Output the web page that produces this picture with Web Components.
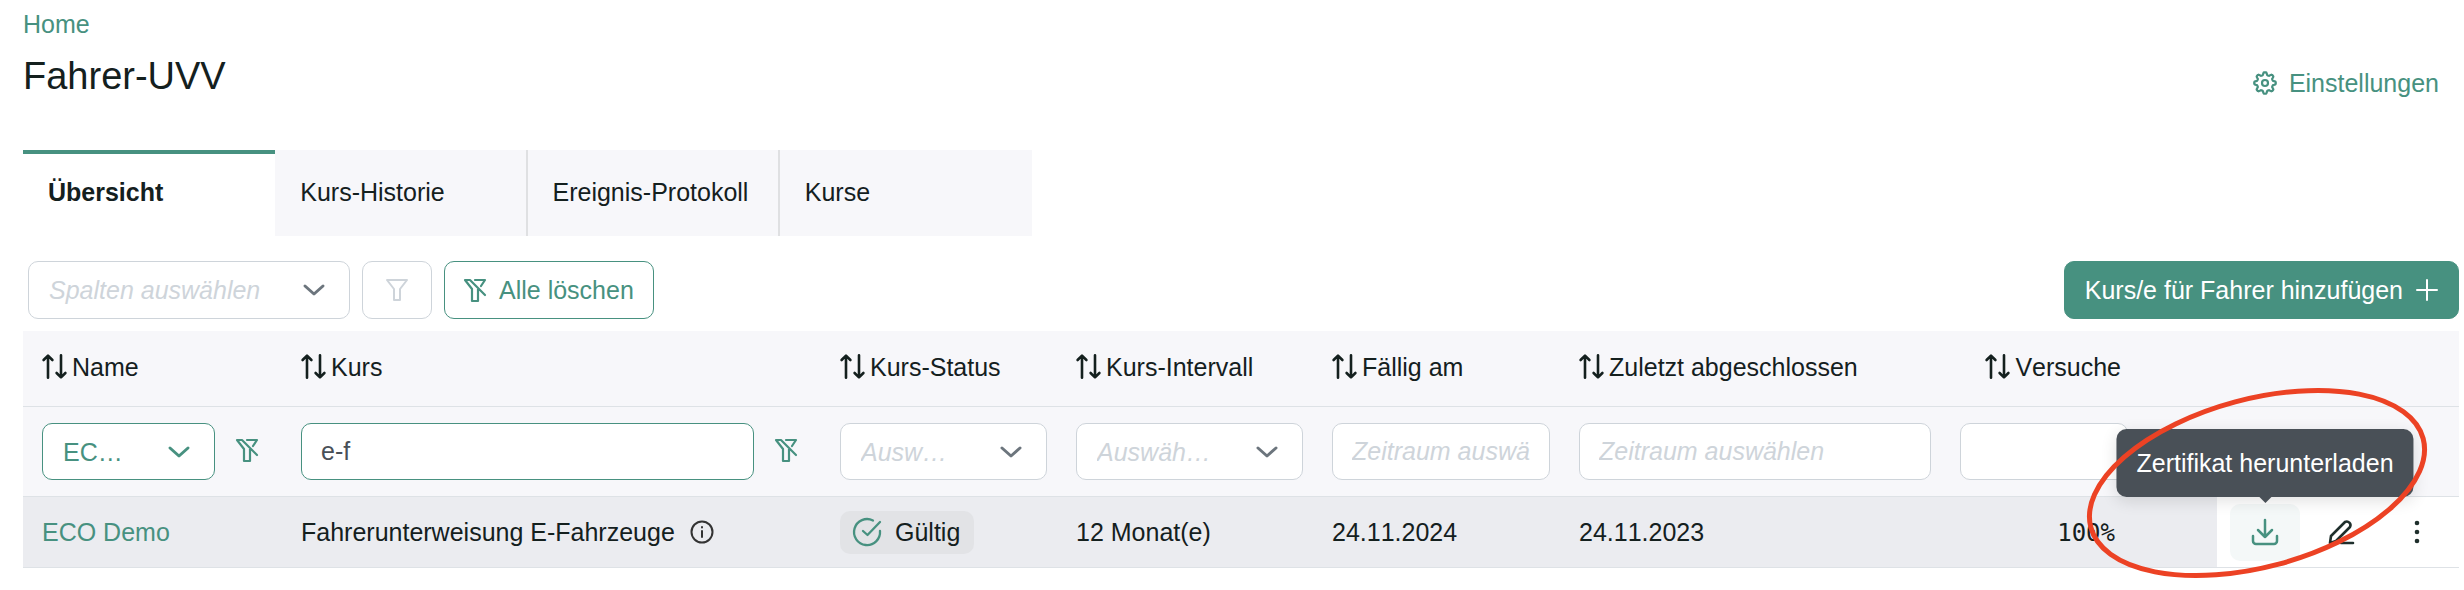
<!DOCTYPE html>
<html lang="de">
<head>
<meta charset="utf-8">
<title>Fahrer-UVV</title>
<style>
  html { background: #fff; }
  body { margin: 0; font: 25px/32px "Liberation Sans", Arial, sans-serif; color: #14201e; font-kerning: none; }
</style>
</head>
<body>
<uvv-page></uvv-page>

<template id="page">
  <style>
    :host { display: block; position: relative; padding: 8px 5px 16px 23px; }
    a { color: #479180; text-decoration: none; }
    h1 { margin: 17px 0 0; font-size: 38px; line-height: 38px; font-weight: 400; }
    header { display: flex; justify-content: space-between; height: 142px; }
    .settings { display: flex; align-items: center; gap: 12px; align-self: flex-start; margin: 59px 20px 0 0; }
    .toolbar { display: flex; align-items: center; gap: 12px; padding: 25px 0 12px 5px; }
    .toolbar uvv-select { width: 322px; --field-height: 58px; }
    .spacer { flex: 1; }
  </style>
  <header>
    <div>
      <nav aria-label="Pfad"><a href="#home">Home</a></nav>
      <h1>Fahrer-UVV</h1>
    </div>
    <a class="settings" href="#einstellungen"><uvv-icon name="gear"></uvv-icon>Einstellungen</a>
  </header>
  <uvv-tabs>
    <uvv-tab active>Übersicht</uvv-tab>
    <uvv-tab>Kurs-Historie</uvv-tab>
    <uvv-tab>Ereignis-Protokoll</uvv-tab>
    <uvv-tab>Kurse</uvv-tab>
  </uvv-tabs>
  <div class="toolbar">
    <uvv-select label="Spalten" text="Spalten auswählen"></uvv-select>
    <uvv-button variant="muted" label="Filter"><uvv-icon name="filter"></uvv-icon></uvv-button>
    <uvv-button variant="outline"><uvv-icon name="filter-slash"></uvv-icon>Alle löschen</uvv-button>
    <span class="spacer"></span>
    <uvv-button variant="solid">Kurs/e für Fahrer hinzufügen<uvv-icon name="plus"></uvv-icon></uvv-button>
  </div>
  <uvv-table></uvv-table>
</template>

<template id="table">
  <style>
    :host { display: block; }
    table { width: 100%; border-collapse: separate; border-spacing: 0; table-layout: fixed; }
    th, td { box-sizing: border-box; padding: 0 15px 0 14px; text-align: left; font-weight: 400; white-space: nowrap; vertical-align: middle; border-bottom: 1px solid #dee2e6; }
    th:first-child, td:first-child { padding-left: 19px; }
    thead th, thead td { background: #f7f7fa; }
    .heads th { height: 76px; }
    .filters td { height: 90px; }
    tbody td { height: 71px; background: #ebecf0; }
    .sort { display: inline-flex; align-items: center; gap: 6px; padding: 0; border: 0; background: none; color: inherit; font: inherit; font-kerning: none; }
    .field { display: flex; align-items: center; gap: 21px; }
    .field > :first-child { flex: 1; min-width: 0; }
    .num { text-align: right; padding-right: 22px; }
    td.num { padding-right: 28px; }
    .mono { font: 24px/32px "DejaVu Sans Mono", monospace; }
    a { color: #479180; text-decoration: none; }
    .course { display: flex; align-items: center; gap: 15px; }
    .course uvv-icon { color: #333; }
    tbody td.actions { background: #fff; padding: 0; }
    .row { display: flex; align-items: center; padding-left: 13px; gap: 6px; }
  </style>
  <table>
    <colgroup>
      <col style="width:264px"><col><col style="width:236px"><col style="width:256px"><col style="width:247px"><col style="width:381px"><col style="width:197px"><col style="width:74px"><col style="width:242px">
    </colgroup>
    <thead>
      <tr class="heads">
        <th scope="col"><button class="sort"><uvv-icon name="sort"></uvv-icon>Name</button></th>
        <th scope="col"><button class="sort"><uvv-icon name="sort"></uvv-icon>Kurs</button></th>
        <th scope="col"><button class="sort"><uvv-icon name="sort"></uvv-icon>Kurs-Status</button></th>
        <th scope="col"><button class="sort"><uvv-icon name="sort"></uvv-icon>Kurs-Intervall</button></th>
        <th scope="col"><button class="sort"><uvv-icon name="sort"></uvv-icon>Fällig am</button></th>
        <th scope="col"><button class="sort"><uvv-icon name="sort"></uvv-icon>Zuletzt abgeschlossen</button></th>
        <th scope="col" class="num"><button class="sort"><uvv-icon name="sort"></uvv-icon>Versuche</button></th>
        <td></td><td></td>
      </tr>
      <tr class="filters">
        <td><div class="field"><uvv-select active label="Name" text="EC…"></uvv-select><uvv-clear></uvv-clear></div></td>
        <td><div class="field"><uvv-input active label="Kurs" value="e-f"></uvv-input><uvv-clear></uvv-clear></div></td>
        <td><uvv-select label="Kurs-Status" text="Ausw…"></uvv-select></td>
        <td><uvv-select label="Kurs-Intervall" text="Auswäh…"></uvv-select></td>
        <td><uvv-input label="Fällig am" placeholder="Zeitraum auswählen"></uvv-input></td>
        <td><uvv-input label="Zuletzt abgeschlossen" placeholder="Zeitraum auswählen"></uvv-input></td>
        <td><uvv-input label="Versuche"></uvv-input></td>
        <td></td><td></td>
      </tr>
    </thead>
    <tbody>
      <tr>
        <td><a href="#eco-demo">ECO Demo</a></td>
        <td><span class="course">Fahrerunterweisung E-Fahrzeuge<uvv-icon name="info"></uvv-icon></span></td>
        <td><uvv-badge>Gültig</uvv-badge></td>
        <td>12 Monat(e)</td>
        <td>24.11.2024</td>
        <td>24.11.2023</td>
        <td class="num"><span class="mono">100%</span></td>
        <td></td>
        <td class="actions"><div class="row">
          <uvv-action icon="download" label="Herunterladen" tip="Zertifikat herunterladen" hot></uvv-action>
          <uvv-action icon="pencil" label="Bearbeiten"></uvv-action>
          <uvv-action icon="dots" label="Mehr"></uvv-action>
        </div></td>
      </tr>
    </tbody>
  </table>
</template>

<script>
  const define = (name, html, setup) => customElements.define(name, class extends HTMLElement {
    connectedCallback() {
      if (this.shadowRoot) return;
      const root = this.attachShadow({ mode: 'open' });
      if (html instanceof HTMLTemplateElement) root.append(html.content.cloneNode(true));
      else root.innerHTML = html;
      if (setup) setup(this, root);
    }
  });

  /* [width, height, stroke width, markup] */
  const ICONS = {
    'sort': [24, 25, 2.6, '<path d="M6 23.700V2M1.600 6L6 1.600 10.400 6M19 1.300v22M14.600 19l4.400 4.400 4.400-4.400"/>'],
    'chevron': [22, 12, 3, '<path d="M2 2l9 8 9-8"/>'],
    'filter': [22, 24, 2, '<path d="M1 2h20l-7 9v11H8V11z"/>'],
    'filter-slash': [22, 24, 2.2, '<path d="M11 2h10l-4 6M21 17L6 2H1l7 9v12h6V11"/>'],
    'plus': [22, 22, 2, '<path d="M11 1v20M1 11h20"/>'],
    'info': [24, 24, 2, '<circle cx="12" cy="12" r="10.500"/><path d="M12 11v6M12 7v.5"/>'],
    'check': [28, 28, 2.3, '<path d="M20 2.500A13 13 0 1 0 27 13M10 13l4.500 4L27 4"/>'],
    'download': [26, 26, 2.5, '<path d="M13 1v17M6 11l7 7 7-7M1 17v5a3 3 0 0 0 3 3h18a3 3 0 0 0 3-3v-5"/>'],
    'pencil': [26, 26, 2.6, '<path d="M2 24l1-7L17 3a3.700 3.700 0 0 1 5 5L8 22zM13 24h12"/>'],
    'dots': [6, 24, 0, '<g fill="currentColor"><circle cx="3" cy="3" r="2.300"/><circle cx="3" cy="12" r="2.300"/><circle cx="3" cy="21" r="2.300"/></g>'],
    'gear': [24, 24, 2.2, '<circle cx="12" cy="12" r="3"/>']
  };
  /* Eight-toothed wheel around the hub of the gear icon */
  const gear = () => {
    let d = '';
    for (let i = 0; i <= 96; i++) {
      const a = i / 96 * Math.PI * 2;
      const r = 9.4 + 1.4 * Math.tanh(2.2 * Math.cos(8 * a));
      d += (i ? 'L' : 'M') + (12 + r * Math.cos(a)).toFixed(2) + ' ' + (12 + r * Math.sin(a)).toFixed(2);
    }
    return '<path d="' + d + 'z"/>';
  };
  ICONS.gear[3] += gear();

  define('uvv-icon', '<style>:host{display:inline-flex;flex:none}svg{display:block;overflow:visible}</style>', (el, root) => {
    const [w, h, s, body] = ICONS[el.getAttribute('name')];
    root.innerHTML += `<svg width="${w}" height="${h}" viewBox="0 0 ${w} ${h}" fill="none" stroke="currentColor" stroke-width="${s}" stroke-linecap="round" stroke-linejoin="round" aria-hidden="true">${body}</svg>`;
  });

  define('uvv-tabs', `<style>
    :host { display: flex; width: 1009px; max-width: 100%; }
  </style><slot></slot>`);

  define('uvv-tab', `<style>
    :host { display: block; flex: 1; min-width: 0; }
    button { display: block; width: 100%; height: 86px; box-sizing: border-box; padding: 0 25px 2px; border: 0; border-right: 2px solid #dfe0e2; background: #f7f7fa; color: inherit; font: inherit; font-kerning: none; text-align: left; white-space: nowrap; }
    :host([active]) button { border: 0; border-top: 4px solid #479180; padding-bottom: 6px; background: #fff; font-weight: 700; }
    :host(:last-child) button { border-right: 0; }
  </style><button role="tab"><slot></slot></button>`);

  define('uvv-button', `<style>
    :host { display: block; flex: none; }
    button { display: flex; align-items: center; gap: 13px; height: 58px; box-sizing: border-box; padding: 0 19px; border: 1px solid #479180; border-radius: 10px; background: #fff; color: #479180; font: inherit; font-kerning: none; white-space: nowrap; }
    :host([variant=muted]) button { padding: 0 23px; border-color: #ced4da; color: #ced4da; }
    :host([variant=solid]) button { padding: 0 20px; background: #479180; color: #fff; }
  </style><button><slot></slot></button>`, (el, root) => {
    if (el.hasAttribute('label')) root.querySelector('button').setAttribute('aria-label', el.getAttribute('label'));
  });

  define('uvv-select', `<style>
    :host { display: grid; align-items: center; color: #6c757d; }
    select { grid-area: 1/1; width: 100%; min-width: 0; height: var(--field-height, 57px); box-sizing: border-box; margin: 0; padding: 0 60px 0 20px; appearance: none; border: 1px solid #ced4da; border-radius: 10px; background: #fff; color: #ced4da; font: inherit; font-kerning: none; font-style: italic; }
    uvv-icon { grid-area: 1/1; justify-self: end; margin-right: 25px; pointer-events: none; }
    :host([active]) { color: #479180; }
    :host([active]) select { border-color: #479180; color: #479180; font-style: normal; }
  </style><select><option></option></select><uvv-icon name="chevron"></uvv-icon>`, (el, root) => {
    root.querySelector('select').setAttribute('aria-label', el.getAttribute('label'));
    root.querySelector('option').textContent = el.getAttribute('text');
  });

  define('uvv-input', `<style>
    :host { display: block; }
    input { display: block; width: 100%; height: 57px; box-sizing: border-box; margin: 0; padding: 0 19px; border: 1px solid #ced4da; border-radius: 10px; background: #fff; color: #495057; font: inherit; font-kerning: none; }
    input::placeholder { color: #ced4da; font-style: italic; opacity: 1; }
    :host([active]) input { border-color: #479180; }
  </style><input type="text">`, (el, root) => {
    const input = root.querySelector('input');
    input.setAttribute('aria-label', el.getAttribute('label'));
    input.placeholder = el.getAttribute('placeholder') || '';
    input.value = el.getAttribute('value') || '';
  });

  define('uvv-clear', `<style>
    :host { display: block; flex: none; margin-right: 14px; }
    button { display: block; padding: 0; border: 0; background: none; color: #479180; }
  </style><button aria-label="Filter löschen"><uvv-icon name="filter-slash"></uvv-icon></button>`);

  define('uvv-badge', `<style>
    :host { display: inline-flex; align-items: center; gap: 14px; height: 43px; padding: 0 14px 0 13px; border-radius: 10px; background: #e2e3e6; vertical-align: middle; }
    uvv-icon { color: #479180; }
  </style><uvv-icon name="check"></uvv-icon><slot></slot>`);

  define('uvv-action', `<style>
    :host { display: block; position: relative; }
    button { display: flex; align-items: center; justify-content: center; width: 70px; height: 57px; padding: 0; border: 0; border-radius: 10px; background: none; color: #1f2f2c; }
    :host([hot]) button { background: #f4f8f8; color: #479180; }
    .tip { position: absolute; left: 50%; bottom: calc(100% + 7px); transform: translateX(-50%); display: flex; align-items: center; height: 68px; padding: 0 20px; border-radius: 10px; background: #495057; color: #fff; white-space: nowrap; box-shadow: 0 4px 16px rgba(0,0,0,.12); }
    .tip::after { content: ""; position: absolute; top: 100%; left: 50%; margin-left: -6px; border: 6px solid transparent; border-top-color: #495057; border-bottom: 0; }
  </style><button></button>`, (el, root) => {
    const button = root.querySelector('button');
    button.setAttribute('aria-label', el.getAttribute('label'));
    button.innerHTML = `<uvv-icon name="${el.getAttribute('icon')}"></uvv-icon>`;
    if (el.hasAttribute('tip')) root.innerHTML += `<span class="tip" role="tooltip">${el.getAttribute('tip')}</span>`;
  });

  /* Red ring laid over the tooltip and its button */
  define('uvv-highlight', `<style>
    :host { position: absolute; right: 38px; top: 387px; pointer-events: none; }
    svg { display: block; overflow: visible; }
  </style><svg width="338" height="192" viewBox="0 0 338 192" fill="none" stroke="#ec4224" stroke-width="5" aria-hidden="true">
    <ellipse cx="169" cy="96" rx="172" ry="84" transform="rotate(-15 169 96)"/>
  </svg>`);

  define('uvv-table', document.getElementById('table'));
  define('uvv-page', document.getElementById('page'), (el, root) => root.append(document.createElement('uvv-highlight')));
</script>
</body>
</html>
